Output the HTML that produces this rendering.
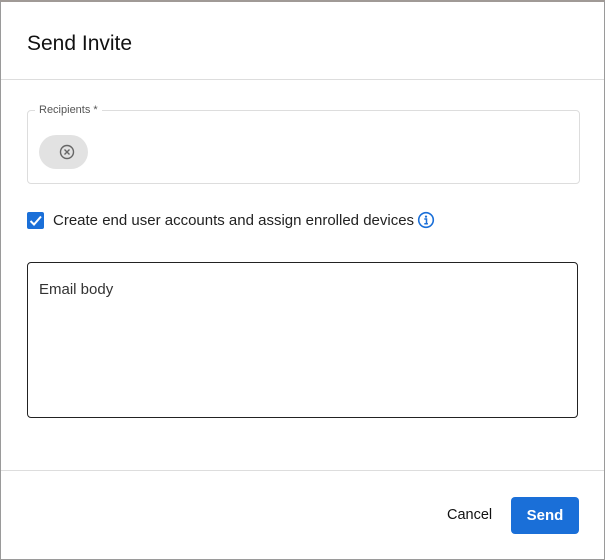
<html><head><style>
body{margin:0;width:605px;height:560px;position:relative;font-family:"Liberation Sans",sans-serif;background:#fff;overflow:hidden}
.frame{position:absolute;left:0;top:0;width:603px;height:557px;border:1px solid #9a9a9a;border-top:2px solid #a09a96;box-sizing:content-box}
.a{position:absolute}
</style></head><body>
<div class="frame"></div>
<div class="a" style="left:27px;top:32px;font-size:21px;color:#111">Send Invite</div>
<div class="a" style="left:1px;top:79px;width:603px;height:1px;background:#ddd"></div>
<div class="a" style="left:27px;top:110px;width:551px;height:72px;border:1px solid #ddd;border-radius:4px"></div>
<div class="a" style="left:35px;top:104px;padding:0 4px;background:#fff;font-size:11px;color:#555">Recipients *</div>
<div class="a" style="left:39px;top:135px;width:49px;height:34px;border-radius:17px;background:#e2e2e2"></div>
<svg class="a" style="left:58px;top:143px" width="18" height="18" viewBox="0 0 18 18"><circle cx="9" cy="9" r="6.5" fill="none" stroke="#666" stroke-width="1.4"/><path d="M6.5 6.5l5 5M11.5 6.5l-5 5" stroke="#666" stroke-width="1.4"/></svg>
<div class="a" style="left:27px;top:212px;width:17px;height:17px;background:#1a6fd8;border-radius:2px"></div>
<svg class="a" style="left:27px;top:212px" width="17" height="17"><path d="M3.5 9l3.5 3.5 7-8" fill="none" stroke="#fff" stroke-width="2"/></svg>
<div class="a" style="left:53px;top:212px;font-size:15px;color:#222">Create end user accounts and assign enrolled devices</div>
<svg class="a" style="left:417px;top:211px" width="18" height="18"><circle cx="9" cy="9" r="7.3" fill="none" stroke="#1a6fd8" stroke-width="1.6"/><circle cx="9" cy="5.6" r="1.1" fill="#1a6fd8"/><path d="M7.3 8h2.2v4.6M7.3 12.8h3.6" fill="none" stroke="#1a6fd8" stroke-width="1.5"/></svg>
<div class="a" style="left:27px;top:262px;width:549px;height:154px;border:1.5px solid #222;border-radius:4px"></div>
<div class="a" style="left:39px;top:281px;font-size:15px;color:#333">Email body</div>
<div class="a" style="left:1px;top:470px;width:603px;height:1px;background:#ddd"></div>
<div class="a" style="left:447px;top:507px;font-size:14.5px;color:#111">Cancel</div>
<div class="a" style="left:511px;top:497px;width:68px;height:37px;background:#1a6fd8;border-radius:4px;color:#fff;font-weight:bold;font-size:15px;text-align:center;line-height:38px">Send</div>
</body></html>
